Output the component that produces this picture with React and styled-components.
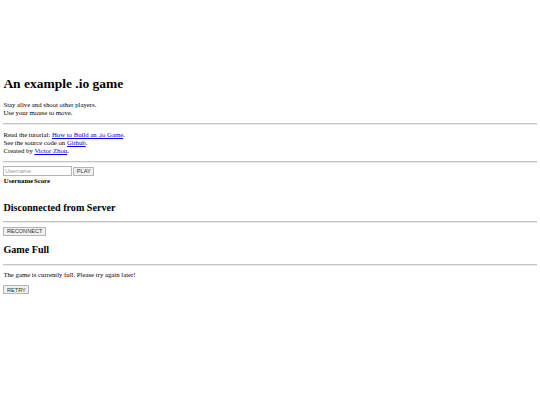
import React from "react"
import styled, { createGlobalStyle } from "styled-components"

const GlobalStyle = createGlobalStyle`
  html, body {
    margin: 0;
    background: #ffffff;
  }
  body {
    font-family: "Liberation Serif", "Times New Roman", serif;
    color: #000000;
  }
`

// the page was shot at 1280px wide and shrunk to 540
const Page = styled.div`
  zoom: 0.421875;
  width: 1264px;
  padding: 8px;
  font-size: 16px;
  line-height: normal;
`

const GameCanvas = styled.canvas`
  display: block;
  width: 300px;
  height: 150px;
`

const Title = styled.h1`
  font-family: "Liberation Serif", "Times New Roman", serif;
  font-size: 32px;
  font-weight: bold;
  margin: 22px 0;
`

const Heading = styled.h2`
  font-family: "Liberation Serif", "Times New Roman", serif;
  font-size: 24px;
  font-weight: bold;
  margin: 20px 0;
`

const Text = styled.p`
  margin: 14px 0;
  line-height: 19px;
`

const Rule = styled.hr`
  margin: 8px 0;
  border: none;
  border-top: 1px solid #c4c4c4;
  border-bottom: 1px solid #ececec;
  height: 0;
`

const Link = styled.a`
  color: #0000ee;
  text-decoration: underline;
`

const Field = styled.input`
  font-family: "Liberation Sans", Arial, sans-serif;
  font-size: 13.33px;
  padding: 1px 2px;
  border: 1px solid #b4b4b4;
  width: 153px;
  height: 17px;
  vertical-align: baseline;
  &::placeholder {
    color: #9a9a9a;
  }
`

const Button = styled.button`
  font-family: "Liberation Sans", Arial, sans-serif;
  font-size: 13.33px;
  padding: 1px 6px;
  margin: 0 0 0 ${(p) => (p.$inline ? "4px" : "0")};
  background: #f0f0f0;
  border: 1px solid #b4b4b4;
  border-radius: 2px;
  color: #333333;
`

const Board = styled.table`
  border-spacing: 2px;
  th,
  td {
    padding: 1px;
  }
  th {
    font-weight: bold;
    text-align: center;
  }
`

const emptyRows = [0, 1, 2, 3, 4, 5, 6, 7, 8, 9, 10]

const App = () => {
  return (
    <>
      <GlobalStyle />
      <Page>
        <GameCanvas width={300} height={150} />
        <div>
          <Title>An example .io game</Title>
          <Text>
            Stay alive and shoot other players.
            <br />
            Use your mouse to move.
          </Text>
          <Rule />
          <Text>
            Read the tutorial: <Link href="#">How to Build an .io Game</Link>.
            <br />
            See the source code on <Link href="#">Github</Link>.
            <br />
            Created by <Link href="#">Victor Zhou</Link>.
          </Text>
          <Rule />
          <Field type="text" placeholder="Username" />
          <Button $inline>PLAY</Button>
        </div>
        <Board>
          <tbody>
            <tr>
              <th>Username</th>
              <th>Score</th>
            </tr>
            {emptyRows.map((i) => (
              <tr key={i}>
                <td></td>
                <td></td>
              </tr>
            ))}
          </tbody>
        </Board>
        <div>
          <Heading>Disconnected from Server</Heading>
          <Rule />
          <Button>RECONNECT</Button>
        </div>
        <div>
          <Heading>Game Full</Heading>
          <Rule />
          <Text>The game is currently full. Please try again later!</Text>
          <Button>RETRY</Button>
        </div>
      </Page>
    </>
  )
}

export default App
